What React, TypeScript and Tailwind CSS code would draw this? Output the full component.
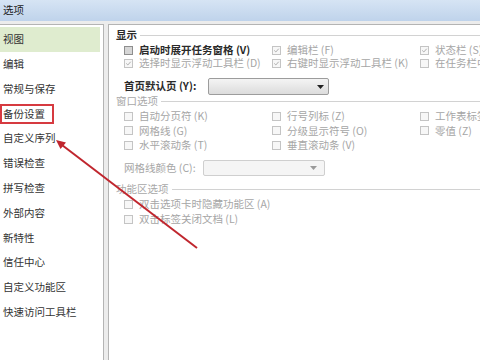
import clsx from "clsx";

type Opt = {
  label: string;
  checked?: boolean;
  enabled?: boolean;
};

const navItems = [
  "视图",
  "编辑",
  "常规与保存",
  "备份设置",
  "自定义序列",
  "错误检查",
  "拼写检查",
  "外部内容",
  "新特性",
  "信任中心",
  "自定义功能区",
  "快速访问工具栏",
];

const showRows: Opt[][] = [
  [
    { label: "启动时展开任务窗格 (V)", enabled: true },
    { label: "编辑栏 (F)", checked: true },
    { label: "状态栏 (S)", checked: true },
  ],
  [
    { label: "选择时显示浮动工具栏 (D)", checked: true },
    { label: "右键时显示浮动工具栏 (K)", checked: true },
    { label: "在任务栏中显示所有窗口 (A)" },
  ],
];

const windowRows: Opt[][] = [
  [{ label: "自动分页符 (K)" }, { label: "行号列标 (Z)" }, { label: "工作表标签 (B)" }],
  [{ label: "网格线 (G)" }, { label: "分级显示符号 (O)" }, { label: "零值 (Z)" }],
  [{ label: "水平滚动条 (T)" }, { label: "垂直滚动条 (V)" }],
];

const ribbonRows: Opt[] = [
  { label: "双击选项卡时隐藏功能区 (A)" },
  { label: "双击标签关闭文档 (L)" },
];

const CheckBox = ({ checked, enabled }: { checked?: boolean; enabled?: boolean }) => (
  <span
    className={clsx(
      "w-[9px] h-[9px] border shrink-0 flex items-center justify-center",
      enabled ? "border-[#8e8e8e] bg-[#d6d6d6]" : "border-[#c4c4c4] bg-[#f7f7f7]"
    )}
  >
    {checked && (
      <svg width="9" height="9" viewBox="0 0 9 9">
        <path d="M1.6 4.4 L3.6 6.4 L7.4 2.2" fill="none" stroke="#a8a8a8" strokeWidth="1.2" />
      </svg>
    )}
  </span>
);

const Option = ({ opt }: { opt: Opt }) => (
  <div className="flex items-center gap-[6px] whitespace-nowrap">
    <CheckBox checked={opt.checked} enabled={opt.enabled} />
    <span className={clsx(opt.enabled ? "text-[#2a2a2a] font-bold" : "text-[#a6a6a6]")}>
      {opt.label}
    </span>
  </div>
);

const SectionHeader = ({ title, enabled, h }: { title: string; enabled?: boolean; h: string }) => (
  <div className={clsx("flex items-center gap-[3px]", h)}>
    <span className={clsx("whitespace-nowrap", enabled ? "text-[#2a2a2a] font-bold" : "text-[#a8a8a8]")}>
      {title}
    </span>
    <div className="flex-1 h-px bg-[#d2d2d2]" />
  </div>
);

const DropArrow = ({ color }: { color: string }) => (
  <svg width="7" height="4" viewBox="0 0 7 4">
    <path d="M0 0 L7 0 L3.5 4 Z" fill={color} />
  </svg>
);

export default function App() {
  return (
    <div className="relative w-[480px] h-[360px] overflow-hidden bg-[#ececec] text-[10.5px] leading-none font-['Noto_Sans_CJK_SC','Liberation_Sans',sans-serif]">
      {/* title bar */}
      <div className="h-[21px] flex items-center pl-[3px] bg-gradient-to-b from-[#d6e4f4] to-[#bfd3eb] text-[#1c1c1c]">
        选项
      </div>

      <div className="flex h-[339px] pt-[3px]">
        {/* nav */}
        <div className="w-[104px] shrink-0 bg-white border-t border-r border-[#b4b4b4] pt-[2px] pr-[3px] text-[#333]">
          {navItems.map((item, i) => (
            <div
              key={item}
              className={clsx(
                "h-[24.8px] flex items-center pl-[3px] whitespace-nowrap",
                i === 0 && "bg-[#dfeccf]"
              )}
            >
              {item}
            </div>
          ))}
        </div>

        {/* settings */}
        <div className="ml-[4px] flex-1 bg-white border-t border-l border-[#b4b4b4] pt-[3px] pl-[7px] overflow-hidden">
          <SectionHeader title="显示" enabled h="h-[14px]" />
          <div className="mt-[2px] pl-[8px]">
            {showRows.map((row, i) => (
              <div key={i} className="h-[13px] grid grid-cols-[148px_148px_1fr] items-center">
                {row.map((opt) => (
                  <Option key={opt.label} opt={opt} />
                ))}
              </div>
            ))}
          </div>

          <div className="mt-[8px] h-[17px] pl-[8px] flex items-center">
            <span className="w-[84px] text-[#2a2a2a] font-bold whitespace-nowrap">首页默认页 (Y):</span>
            <div className="w-[121px] h-[17px] rounded-[2px] border border-[#9c9c9c] bg-gradient-to-b from-[#f4f4f4] to-[#dcdcdc] flex items-center justify-end pr-[4px]">
              <DropArrow color="#222" />
            </div>
          </div>

          <SectionHeader title="窗口选项" h="h-[12px]" />
          <div className="mt-[2px] pl-[8px]">
            {windowRows.map((row, i) => (
              <div key={i} className="h-[14.5px] grid grid-cols-[148px_148px_1fr] items-center">
                {row.map((opt) => (
                  <Option key={opt.label} opt={opt} />
                ))}
              </div>
            ))}
          </div>

          <div className="mt-[7.5px] h-[16px] pl-[8px] flex items-center">
            <span className="w-[79px] text-[#a6a6a6] whitespace-nowrap">网格线颜色 (C):</span>
            <div className="w-[122px] h-[16px] rounded-[2px] border border-[#cfcfcf] bg-[#f5f5f5] flex items-center justify-end pr-[7px]">
              <DropArrow color="#9a9a9a" />
            </div>
          </div>

          <div className="mt-[7px]">
            <SectionHeader title="功能区选项" h="h-[12px]" />
          </div>
          <div className="mt-[2px] pl-[8px]">
            {ribbonRows.map((opt) => (
              <div key={opt.label} className="h-[15px] flex items-center">
                <Option opt={opt} />
              </div>
            ))}
          </div>
        </div>
      </div>

      {/* annotation: red box */}
      <div className="absolute left-0 top-[104px] w-[54px] h-[20px] border-2 border-[#d63a40]" />

      {/* annotation: arrow */}
      <svg className="absolute inset-0 pointer-events-none" width="480" height="360" viewBox="0 0 480 360">
        <line x1="197" y1="248" x2="62" y2="145" stroke="#c0262e" strokeWidth="2" />
        <polygon points="56,140 66,142.5 60.5,149" fill="#c0262e" />
      </svg>
    </div>
  );
}
